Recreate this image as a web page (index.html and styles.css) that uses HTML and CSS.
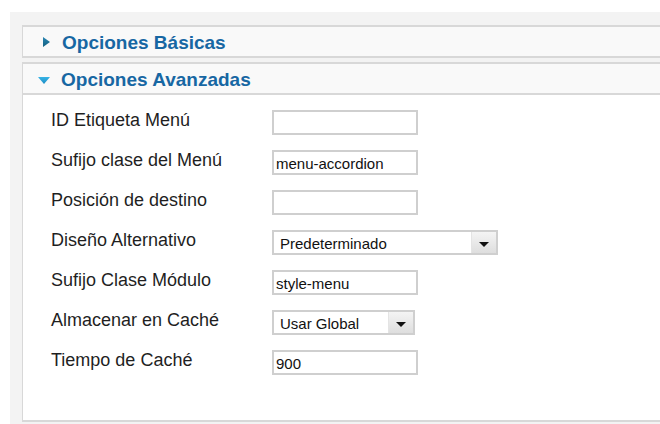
FILE: index.html
```html
<!DOCTYPE html>
<html lang="es">
<head>
<meta charset="utf-8">
<title>Opciones del módulo de menú</title>
<link rel="stylesheet" href="styles.css">
</head>
<body>
<div class="page">
  <div class="panes">
    <section class="pane">
      <h3 class="pane-title">
        <svg class="toggle" width="7" height="10" viewBox="0 0 7 10">
          <defs>
            <linearGradient id="gClosed" x1="0" y1="0" x2="0" y2="1">
              <stop offset="0" stop-color="#2b86b4"/>
              <stop offset="1" stop-color="#14607f"/>
            </linearGradient>
          </defs>
          <path d="M0 0 L7 5 L0 10 Z" fill="url(#gClosed)"/>
        </svg>
        <span>Opciones Básicas</span>
      </h3>
    </section>

    <section class="pane open">
      <h3 class="pane-title">
        <svg class="toggle down" width="12" height="7" viewBox="0 0 12 7">
          <defs>
            <linearGradient id="gOpen" x1="0" y1="0" x2="0" y2="1">
              <stop offset="0" stop-color="#38b4e6"/>
              <stop offset="1" stop-color="#1c8cc4"/>
            </linearGradient>
          </defs>
          <path d="M0 0 L12 0 L6 7 Z" fill="url(#gOpen)"/>
        </svg>
        <span>Opciones Avanzadas</span>
      </h3>
      <div class="pane-body">
        <div class="form-grid">
          <label class="field-label">ID Etiqueta Menú</label>
          <div class="text-input"></div>

          <label class="field-label">Sufijo clase del Menú</label>
          <div class="text-input">menu-accordion</div>

          <label class="field-label">Posición de destino</label>
          <div class="text-input"></div>

          <label class="field-label">Diseño Alternativo</label>
          <div class="select wide">
            <span class="select-value">Predeterminado</span>
            <span class="select-btn"><i class="caret"></i></span>
          </div>

          <label class="field-label">Sufijo Clase Módulo</label>
          <div class="text-input">style-menu</div>

          <label class="field-label">Almacenar en Caché</label>
          <div class="select narrow">
            <span class="select-value">Usar Global</span>
            <span class="select-btn"><i class="caret"></i></span>
          </div>

          <label class="field-label">Tiempo de Caché</label>
          <div class="text-input">900</div>
        </div>
      </div>
    </section>
  </div>
</div>
</body>
</html>
```

FILE: styles.css
```css
html, body {
  margin: 0;
  padding: 0;
  background: #ffffff;
  overflow: hidden;
}

body {
  font-family: "Liberation Sans", Arial, sans-serif;
  color: #222222;
}

/* grey backdrop that holds the accordion panes */
.page {
  margin: 12px 0 0 10px;
  padding: 13px 0 0 12px;
  background: #f3f3f3;
  height: 420px;
}

.panes {
  display: flex;
  flex-direction: column;
  gap: 4px;
}

.pane {
  border: 2px solid #d8d8d8;
  border-left-width: 1px;
  border-right: 0;
  background: #ffffff;
}

.pane-title {
  margin: 0;
  height: 29px;
  padding: 2px 0 0 20px;
  box-sizing: border-box;
  background: #f9f9f9;
  display: flex;
  align-items: center;
  gap: 12px;
  font-size: 19px;
  font-weight: bold;
  line-height: 27px;
  color: #1767a3;
}

.pane-title .toggle {
  flex: none;
  margin-top: -2px;
}

.pane-title .toggle.down {
  margin-left: -5px;
  margin-right: -1px;
  margin-top: 1px;
}

.pane.open .pane-title {
  border-bottom: 2px solid #d8d8d8;
  height: 31px;
}

.pane-body {
  padding: 15px 0 45px 28px;
}

.form-grid {
  display: grid;
  grid-template-columns: 221px auto;
  grid-auto-rows: 25px;
  row-gap: 15px;
  align-items: center;
  justify-items: start;
}

.field-label {
  font-size: 18px;
  color: #1f1f1f;
  padding-bottom: 4px;
}

.text-input,
.select {
  height: 25px;
  box-sizing: border-box;
  border: 2px solid #cfcfcf;
  background: #ffffff;
  font-size: 15px;
  color: #111111;
}

.text-input {
  width: 146px;
  padding: 3px 0 0 2px;
  line-height: 18px;
}

.select {
  display: flex;
  align-items: stretch;
}

.select.wide { width: 226px; }
.select.narrow { width: 143px; }

.select-value {
  flex: 1;
  padding: 3px 0 0 6px;
  line-height: 18px;
}

.select-btn {
  width: 24px;
  flex: none;
  border-left: 1px solid #e4e4e4;
  background: linear-gradient(#f4f4f4, #dedede);
  display: flex;
  align-items: center;
  justify-content: center;
}

.caret {
  width: 0;
  height: 0;
  border-left: 5px solid transparent;
  border-right: 5px solid transparent;
  border-top: 5px solid #111111;
  margin-top: 3px;
}
```
